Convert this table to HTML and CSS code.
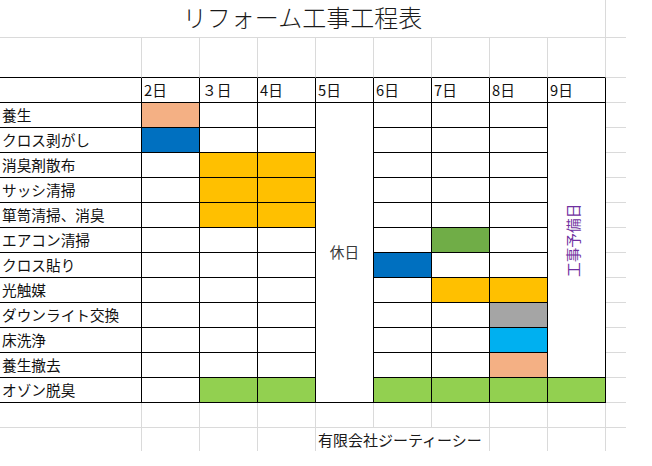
FILE: index.html
```html
<!DOCTYPE html>
<html lang="ja">
<head>
<meta charset="utf-8">
<title>リフォーム工事工程表</title>
<link rel="stylesheet" href="styles.css">
</head>
<body>
<div class="sheet">
  <!-- row 1: title -->
  <div class="c title">リフォーム工事工程表</div>
  <div class="c x"></div>

  <!-- row 2: blank -->
  <div class="c g top"></div>
  <div class="c g top"></div>
  <div class="c g top"></div>
  <div class="c g top"></div>
  <div class="c g top"></div>
  <div class="c g top"></div>
  <div class="c g top"></div>
  <div class="c g top"></div>
  <div class="c g top"></div>
  <div class="c x"></div>

  <!-- row 3: header -->
  <div class="c b"></div>
  <div class="c b hd">2日</div>
  <div class="c b hd">３日</div>
  <div class="c b hd">4日</div>
  <div class="c b hd">5日</div>
  <div class="c b hd">6日</div>
  <div class="c b hd">7日</div>
  <div class="c b hd">8日</div>
  <div class="c b hd">9日</div>
  <div class="c x"></div>

  <!-- task 1 -->
  <div class="c b lb">養生</div>
  <div class="c b salmon"></div>
  <div class="c b"></div>
  <div class="c b"></div>
  <div class="c b holiday">休日</div>
  <div class="c b"></div>
  <div class="c b"></div>
  <div class="c b"></div>
  <div class="c b spare"><span class="vtext">工事予備日</span></div>
  <div class="c x"></div>

  <!-- task 2 -->
  <div class="c b lb">クロス剥がし</div>
  <div class="c b blue"></div>
  <div class="c b"></div>
  <div class="c b"></div>
  <div class="c b"></div>
  <div class="c b"></div>
  <div class="c b"></div>
  <div class="c x"></div>

  <!-- task 3 -->
  <div class="c b lb">消臭剤散布</div>
  <div class="c b"></div>
  <div class="c b orange"></div>
  <div class="c b orange"></div>
  <div class="c b"></div>
  <div class="c b"></div>
  <div class="c b"></div>
  <div class="c x"></div>

  <!-- task 4 -->
  <div class="c b lb">サッシ清掃</div>
  <div class="c b"></div>
  <div class="c b orange"></div>
  <div class="c b orange"></div>
  <div class="c b"></div>
  <div class="c b"></div>
  <div class="c b"></div>
  <div class="c x"></div>

  <!-- task 5 -->
  <div class="c b lb">箪笥清掃、消臭</div>
  <div class="c b"></div>
  <div class="c b orange"></div>
  <div class="c b orange"></div>
  <div class="c b"></div>
  <div class="c b"></div>
  <div class="c b"></div>
  <div class="c x"></div>

  <!-- task 6 -->
  <div class="c b lb">エアコン清掃</div>
  <div class="c b"></div>
  <div class="c b"></div>
  <div class="c b"></div>
  <div class="c b"></div>
  <div class="c b green"></div>
  <div class="c b"></div>
  <div class="c x"></div>

  <!-- task 7 -->
  <div class="c b lb">クロス貼り</div>
  <div class="c b"></div>
  <div class="c b"></div>
  <div class="c b"></div>
  <div class="c b blue"></div>
  <div class="c b"></div>
  <div class="c b"></div>
  <div class="c x"></div>

  <!-- task 8 -->
  <div class="c b lb">光触媒</div>
  <div class="c b"></div>
  <div class="c b"></div>
  <div class="c b"></div>
  <div class="c b"></div>
  <div class="c b orange"></div>
  <div class="c b orange"></div>
  <div class="c x"></div>

  <!-- task 9 -->
  <div class="c b lb">ダウンライト交換</div>
  <div class="c b"></div>
  <div class="c b"></div>
  <div class="c b"></div>
  <div class="c b"></div>
  <div class="c b"></div>
  <div class="c b gray"></div>
  <div class="c x"></div>

  <!-- task 10 -->
  <div class="c b lb">床洗浄</div>
  <div class="c b"></div>
  <div class="c b"></div>
  <div class="c b"></div>
  <div class="c b"></div>
  <div class="c b"></div>
  <div class="c b sky"></div>
  <div class="c x"></div>

  <!-- task 11 -->
  <div class="c b lb">養生撤去</div>
  <div class="c b"></div>
  <div class="c b"></div>
  <div class="c b"></div>
  <div class="c b"></div>
  <div class="c b"></div>
  <div class="c b salmon"></div>
  <div class="c x"></div>

  <!-- task 12 -->
  <div class="c b lb">オゾン脱臭</div>
  <div class="c b"></div>
  <div class="c b lime"></div>
  <div class="c b lime"></div>
  <div class="c b lime"></div>
  <div class="c b lime"></div>
  <div class="c b lime"></div>
  <div class="c b lime"></div>
  <div class="c x"></div>

  <!-- blank row -->
  <div class="c g"></div>
  <div class="c g"></div>
  <div class="c g"></div>
  <div class="c g"></div>
  <div class="c g"></div>
  <div class="c g"></div>
  <div class="c g"></div>
  <div class="c g"></div>
  <div class="c g"></div>
  <div class="c x"></div>

  <!-- footer row -->
  <div class="c v"></div>
  <div class="c v"></div>
  <div class="c v"></div>
  <div class="c v"></div>
  <div class="c v footer">有限会社ジーティーシー</div>
  <div class="c v"></div>
  <div class="c v"></div>
  <div class="c"></div>
</div>
</body>
</html>
```

FILE: styles.css
```css
html, body {
  margin: 0;
  padding: 0;
  background: #ffffff;
}

body {
  font-family: "Noto Sans CJK JP", "Noto Sans", sans-serif;
  color: #111111;
  font-size: 14.67px;
}

.sheet {
  display: grid;
  grid-template-columns: 142px repeat(8, 58px) 20px;
  grid-template-rows: 38px 40px 25px repeat(12, 25px) 25px 23px;
  width: 626px;
}

.c {
  box-sizing: border-box;
  min-width: 0;
  display: flex;
  align-items: center;
  white-space: nowrap;
  line-height: 1;
}

/* gray gridline cell */
.g {
  border-right: 1px solid #dadada;
  border-bottom: 1px solid #dadada;
}

.g.top {
  border-bottom-color: #000000;
}

/* vertical gray only */
.v {
  border-right: 1px solid #dadada;
}

/* black bordered table cell */
.b {
  border-right: 1px solid #000000;
  border-bottom: 1px solid #000000;
}

/* outside column */
.x {
  border-bottom: 1px solid #dadada;
}

.title {
  grid-column: span 9;
  justify-content: center;
  border-right: 1px solid #dadada;
  border-bottom: 1px solid #dadada;
  font-size: 24px;
  font-weight: 300;
  color: #1a1a1a;
  padding-bottom: 3px;
}

.hd {
  padding-left: 2px;
  font-size: 14.67px;
}

.lb {
  padding-left: 2px;
  font-size: 14.67px;
}

.holiday {
  grid-row: span 12;
  justify-content: center;
  color: #3a3a3a;
}

.spare {
  grid-row: span 11;
  justify-content: center;
  padding-right: 5px;
}

.vtext {
  display: inline-block;
  transform: rotate(-90deg);
  color: #7030a0;
  font-size: 14.67px;
}

.footer {
  grid-column: span 3;
  padding-left: 2px;
  font-size: 15px;
  color: #1a1a1a;
}

.salmon { background: #f4b084; }
.blue { background: #0070c0; }
.orange { background: #ffc000; }
.green { background: #70ad47; }
.gray { background: #a5a5a5; }
.sky { background: #00b0f0; }
.lime { background: #92d050; }
```
